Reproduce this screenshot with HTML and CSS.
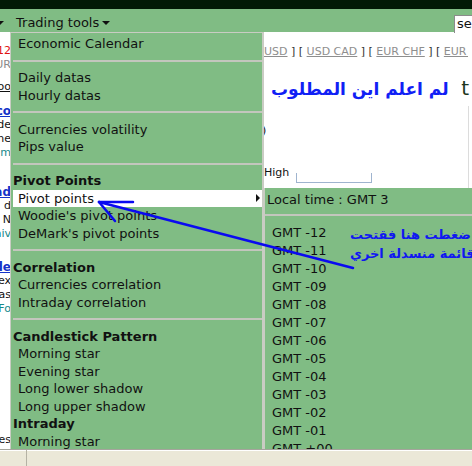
FILE: index.html
```html
<!DOCTYPE html>
<html>
<head>
<meta charset="utf-8">
<link rel="stylesheet" href="styles.css">
</head>
<body>
<div class="topbar"></div>
<div class="nav">
  <span class="prev-caret"></span>
  <span class="nav-item">Trading tools<span class="caret"></span></span>
  <span class="search">search</span>
</div>
<div class="page">
  <div class="side">
    <div class="blk b1">
      <div class="ln red">2012</div>
      <div class="ln gray">EUR</div>
    </div>
    <div class="blk b2">
      <div class="ln ul">boo</div>
    </div>
    <div class="blk b3">
      <div class="ln link">Eco</div>
      <div class="ln">ide</div>
      <div class="ln">me</div>
      <div class="ln teal">m</div>
    </div>
    <div class="blk b4">
      <div class="ln link">ad</div>
      <div class="ln">d</div>
      <div class="ln">I N</div>
      <div class="ln teal">hiv</div>
    </div>
    <div class="blk b5">
      <div class="ln link">de</div>
      <div class="ln">ex</div>
      <div class="ln">as</div>
      <div class="ln teal">Fo</div>
    </div>
    <div class="blk b6">
      <div class="ln">es</div>
    </div>
  </div>
  <div class="main">
    <div class="pairs"><a>USD</a> ] [ <a>USD CAD</a> ] [ <a>EUR CHF</a> ] [ <a>EUR JPY</a> ]</div>
    <div class="headline"><span class="ar" dir="rtl">لم اعلم اين المطلوب</span><span class="t">t</span></div>
    <div class="box">
      <div class="paren">)</div>
      <div class="hirow"><span class="hi">High</span><span class="field"></span></div>
    </div>
  </div>

  <div class="menu">
    <div class="item">Economic Calendar</div>
    <div class="sep"></div>
    <div class="item">Daily datas</div>
    <div class="item">Hourly datas</div>
    <div class="sep"></div>
    <div class="item">Currencies volatility</div>
    <div class="item">Pips value</div>
    <div class="sep"></div>
    <div class="head">Pivot Points</div>
    <div class="item on"><span>Pivot points</span><span class="tri"></span></div>
    <div class="item">Woodie's pivot points</div>
    <div class="item">DeMark's pivot points</div>
    <div class="sep"></div>
    <div class="head">Correlation</div>
    <div class="item">Currencies correlation</div>
    <div class="item">Intraday correlation</div>
    <div class="sep"></div>
    <div class="head">Candlestick Pattern</div>
    <div class="item">Morning star</div>
    <div class="item">Evening star</div>
    <div class="item">Long lower shadow</div>
    <div class="item">Long upper shadow</div>
    <div class="head">Intraday</div>
    <div class="item">Morning star</div>
    <div class="item">Evening star</div>
  </div>

  <div class="submenu">
    <div class="sub-head">Local time : GMT 3</div>
    <div class="sub-sep"></div>
    <div class="sub-item">GMT -12</div>
    <div class="sub-item">GMT -11</div>
    <div class="sub-item">GMT -10</div>
    <div class="sub-item">GMT -09</div>
    <div class="sub-item">GMT -08</div>
    <div class="sub-item">GMT -07</div>
    <div class="sub-item">GMT -06</div>
    <div class="sub-item">GMT -05</div>
    <div class="sub-item">GMT -04</div>
    <div class="sub-item">GMT -03</div>
    <div class="sub-item">GMT -02</div>
    <div class="sub-item">GMT -01</div>
    <div class="sub-item">GMT +00</div>
    <div class="sub-item">GMT +01</div>
  </div>
</div>
<div class="status"><span class="cell"></span></div>

<svg class="arrow" width="472" height="466" viewBox="0 0 472 466">
  <g stroke="#0a0af0" stroke-width="2.5" stroke-linecap="round" fill="none">
    <line x1="99" y1="202" x2="353" y2="268"/>
    <line x1="99" y1="202" x2="133" y2="202"/>
    <line x1="99" y1="202" x2="115" y2="221"/>
  </g>
</svg>
<div class="note">
  <div class="note-line" dir="rtl">ضغطت هنا فقتحت</div>
  <div class="note-line" dir="rtl">قائمة منسدلة اخري</div>
</div>
</body>
</html>
```

FILE: styles.css
```css
* { box-sizing: border-box; margin: 0; padding: 0; }
html, body { width: 472px; height: 466px; overflow: hidden; }
body {
  font-family: "DejaVu Sans", Verdana, sans-serif;
  font-size: 13px;
  color: #111;
  display: flex;
  flex-direction: column;
  background: #fff;
  position: relative;
}
.topbar { height: 9px; flex: none; background: #021a06; }
.nav {
  height: 23px; flex: none; background: #80bc84;
  display: flex; align-items: flex-start;
  position: relative; z-index: 3;
}
.prev-caret {
  width: 0; height: 0;
  border-left: 4px solid transparent; border-right: 4px solid transparent;
  border-top: 4px solid #111;
  margin: 12px 0 0 -4px;
}
.nav-item { margin-left: 12px; padding-top: 4px; line-height: 19px; white-space: nowrap; }
.caret {
  display: inline-block; width: 0; height: 0;
  border-left: 4px solid transparent; border-right: 4px solid transparent;
  border-top: 4px solid #111;
  margin-left: 3px; vertical-align: 2px;
}
.search {
  margin-left: auto; margin-top: 6px;
  width: 18px; height: 18px;
  background: #fff;
  border-top: 1px solid #8c8c8c; border-left: 1px solid #8c8c8c;
  padding-left: 2px; line-height: 16px;
  overflow: hidden; white-space: nowrap;
}

.page { flex: 1; position: relative; overflow: hidden; display: flex; background: #fff; }

.side { width: 11px; flex: none; font-size: 11px; line-height: 14px; }
.ln { display: flex; justify-content: flex-end; white-space: nowrap; }
.b1 { margin-top: 12px; }
.b2 { margin-top: 8px; }
.b3 { margin-top: 10px; }
.b4 { margin-top: 25px; }
.b5 { margin-top: 19px; }
.b6 { margin-top: 117px; }
.red { color: #e01010; }
.gray { color: #8a8a8a; }
.ul { text-decoration: underline; }
.link { color: #1433c8; font-weight: bold; font-size: 12px; text-decoration: underline; }
.teal { color: #17898a; }

.main { flex: 1; min-width: 0; padding: 0 3px 0 251px; }
.pairs {
  margin: 13px 0 0 2px; font-size: 11px; line-height: 14px;
  white-space: nowrap; overflow: hidden; color: #333;
}
.pairs a { color: #8e8e8e; text-decoration: underline; }
.headline {
  margin-top: 16px; display: flex; justify-content: space-between; align-items: baseline;
  padding-left: 9px; font-size: 17px; line-height: 26px; white-space: nowrap;
}
.ar { color: #1020f5; font-weight: bold; }
.t { color: #1d361d; font-size: 20px; }
.box { margin-top: 4px; height: 84px; border-right: 1px solid #dcdcdc; padding-top: 18px; font-size: 11px; line-height: 14px; }
.hirow { margin-top: 26px; height: 19px; display: flex; align-items: flex-end; }
.hi { line-height: 14px; margin-bottom: 3px; margin-left: 2px; }
.field {
  margin-left: 7px; width: 76px; height: 10px;
  border: 1px solid #9fb4cf; border-top: none;
}

.menu {
  position: absolute; left: 10px; top: 0;
  width: 254px; height: 520px;
  background: #80bc84;
  border-style: solid; border-color: #c9ccc3;
  border-width: 1px 2px 0 1px;
  padding-top: 2px; z-index: 2;
}
.item { line-height: 17.5px; padding-left: 7px; white-space: nowrap; }
.head { font-weight: bold; padding-left: 2px; line-height: 17.5px; white-space: nowrap; }
.sep { margin: 7px 0 7.5px 2px; height: 2px; background: #c3c6bd; }
.item.on {
  background: #fff; margin-left: 2px; padding-left: 5px; padding-right: 2px;
  display: flex; justify-content: space-between; align-items: center;
}
.tri {
  width: 0; height: 0;
  border-top: 4px solid transparent; border-bottom: 4px solid transparent;
  border-left: 4px solid #111;
}

.submenu {
  position: absolute; left: 264px; top: 156px; right: 0; height: 320px;
  background: #80bc84; border-left: 1px solid #c9ccc3;
  padding-top: 3px; z-index: 2;
}
.sub-head { padding-left: 2px; line-height: 18px; }
.sub-sep { margin: 5px 0 8px; height: 2px; background: #c3c6bd; }
.sub-item { padding-left: 7px; line-height: 18px; }

.status {
  height: 17px; flex: none; background: #ebe8d8;
  border-top: 1px solid #a5a49c; box-shadow: inset 0 1px #fff;
  display: flex;
}
.cell { width: 27px; border-right: 1px solid #b5b2a4; }

.arrow { position: absolute; left: 0; top: 0; z-index: 5; pointer-events: none; }
.note {
  position: absolute; left: 350px; top: 225px; z-index: 6;
  color: #1018f0; font-size: 13px; line-height: 19px; font-weight: bold;
  white-space: nowrap;
}
.note-line { direction: rtl; width: fit-content; }
```
